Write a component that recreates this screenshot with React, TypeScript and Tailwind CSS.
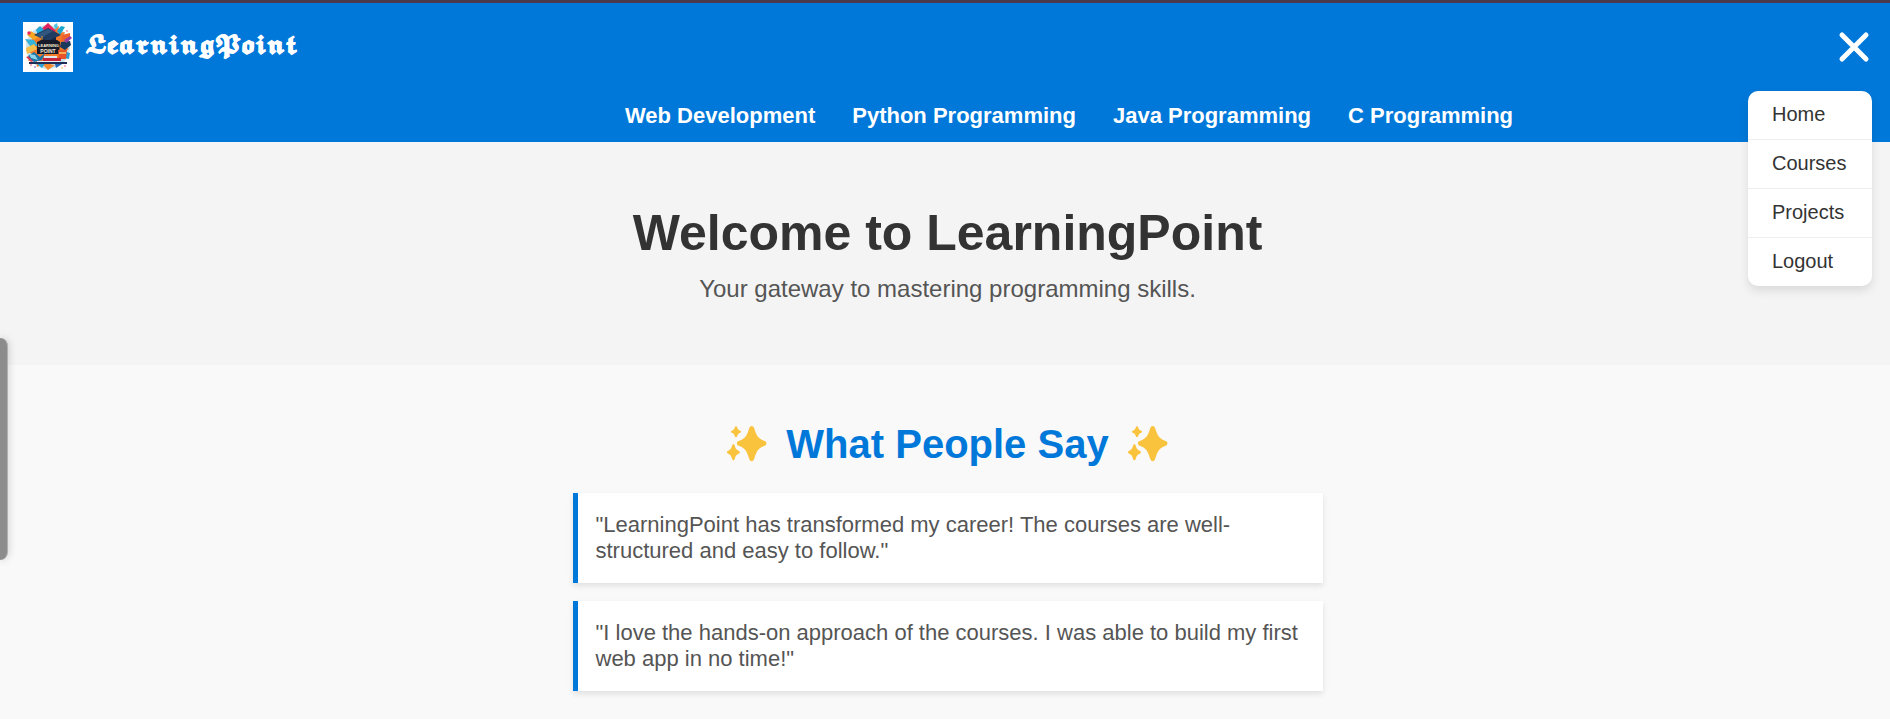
import { useState } from "react";

const courses = ["Web Development", "Python Programming", "Java Programming", "C Programming"];
const menuItems = ["Home", "Courses", "Projects", "Logout"];
const reviews = [
  '"LearningPoint has transformed my career! The courses are well-structured and easy to follow."',
  '"I love the hands-on approach of the courses. I was able to build my first web app in no time!"',
];

function Logo() {
  return (
    <svg viewBox="0 0 50 50" className="size-[50px] shrink-0 bg-white" role="img" aria-label="LearningPoint logo">
      <circle cx="25" cy="25" r="22" fill="#c9e2ee" />
      {/* paint burst */}
      <path d="M25 1l6 6 5-3-1 7 7-1-3 6 7 3-6 4 6 4-6 3 3 7-8-1-1 7-5-3-4 8-5-7-6 4-1-7-8 1 4-7-6-4 6-4-6-5 7-2-3-7 7 2 1-7 5 3z" fill="#f47a2a" />
      <path d="M25 1l8 8-8 5-8-6z" fill="#e3245f" />
      <path d="M17 4l4 4-6 6-2-6z" fill="#21a9dc" />
      <path d="M8 9l8 6-5 3-7-5z" fill="#f9a51f" />
      <circle cx="6" cy="11" r="1.7" fill="#e3245f" />
      <path d="M2 17l9 1 4 6-8 0z" fill="#36b3d8" />
      <path d="M3 26l8-4 3 5-10 5z" fill="#f5c04a" />
      <path d="M34 9l4-5 4 1-5 8z" fill="#1aa4c9" />
      <path d="M31 3l3-2 1 4-3 3z" fill="#4fc6e8" />
      <path d="M39 13l8-2 0 4-9 5z" fill="#f0622c" />
      <path d="M38 20l9-1 1 4-6 5-5-3z" fill="#18395c" />
      <path d="M41 18l6-4 2 2-6 5z" fill="#9a3d9d" />
      <path d="M3 35l9-3 4 5-8 3z" fill="#e23a55" />
      <path d="M37 28l10 3-1 6-10-2z" fill="#2d9fd6" />
      {/* mortarboard */}
      <path d="M18 13l7 2 8-2v6c-5 3-10 3-15 0z" fill="#142743" />
      <path d="M11 13l14-7 13 7-13 6z" fill="#203b60" />
      <path d="M13 13l12-6 5 2-12 7z" fill="#32577f" />
      <path d="M19 14v7" stroke="#f39a26" strokeWidth="1" />
      {/* board */}
      <path d="M14 20l4-2h16l3 2-1 12H14z" fill="#171b29" />
      <g fontFamily="Liberation Sans, sans-serif" fontWeight="700" fill="#f6ead4" textAnchor="middle">
        <text x="25.5" y="25" fontSize="4">LEARNING</text>
        <text x="25" y="31" fontSize="5">POINT</text>
      </g>
      {/* books, mug and tools */}
      <path d="M35 28h9l-1 9h-7z" fill="#e8532a" />
      <path d="M36 30h7v2h-7z" fill="#f9b050" />
      <path d="M5 34l6-4 6 5 5-4-3 7-8 2z" fill="#1c75a6" />
      <path d="M6 32l6 1 3 5-7-2z" fill="#8ed4e8" />
      <path d="M21 34h13v2H21z" fill="#dfe8ee" />
      <path d="M20 36h18v3H20z" fill="#c7273d" />
      <path d="M6 40h38v2H6z" fill="#1d2d55" />
      <path d="M14 39h23v1H14z" fill="#e7edf2" />
      <path d="M14 42l8 0-3 4z" fill="#2aa3da" />
      <path d="M20 43l5-1 7 1-7 5z" fill="#f58a2a" />
      <path d="M32 42l7 0-6 4z" fill="#2567b7" />
      <g fill="#e84a6b">
        <circle cx="8" cy="43" r=".8" /><circle cx="42" cy="44" r=".8" /><circle cx="44" cy="9" r=".8" />
      </g>
      <circle cx="12" cy="45" r=".8" fill="#6b4ba8" />
      <circle cx="39" cy="46" r=".7" fill="#f39a26" />
    </svg>
  );
}

function Sparkles() {
  return (
    <svg viewBox="0 0 40 36" className="h-9 w-10 shrink-0" fill="#fac33e" aria-hidden="true">
      <path d="M24.700 0C26 0 26.800 1 27.300 2.400C29.200 8.400 30.300 12 37 14.700L38.300 15.300C39.800 16.100 39.800 18.600 38.300 19.400L37 20C30.300 22.700 29.200 26.500 27.300 32.600C26.800 34.200 26 35.200 24.700 35.200C23.400 35.200 22.600 34.200 22.100 32.600C20.200 26.500 19.100 22.700 12.400 20L11 19.400C9.500 18.600 9.500 16.100 11 15.300L12.400 14.700C19.100 12 20.200 8.400 22.100 2.400C22.600 1 23.400 0 24.700 0Z" />
      <path d="M9 .2C9.600 .2 9.900 .6 10.100 1.200C10.800 3.200 11.300 4 13.300 4.700C14.400 5.200 14.400 6.200 13.300 6.700C11.300 7.400 10.800 8.300 10.100 10.300C9.900 11 9.600 11.300 9 11.300C8.400 11.300 8.100 11 7.900 10.300C7.200 8.300 6.700 7.400 4.700 6.700C3.600 6.200 3.600 5.200 4.700 4.700C6.700 4 7.200 3.200 7.900 1.200C8.100 .6 8.400 .2 9 .2Z" />
      <path d="M6.400 18.200C7.100 18.200 7.400 18.700 7.700 19.500C8.500 22.500 9.300 23.900 12 25C13.200 25.500 13.200 26.900 12 27.400C9.300 28.500 8.500 29.900 7.700 32.900C7.400 33.700 7.100 34.200 6.400 34.200C5.700 34.200 5.400 33.700 5.100 32.900C4.300 29.900 3.500 28.500 .8 27.400C-.3 26.900-.3 25.500 .8 25C3.500 23.900 4.300 22.500 5.100 19.500C5.400 18.700 5.700 18.200 6.400 18.200Z" />
    </svg>
  );
}

export default function App() {
  const [open, setOpen] = useState(true);

  return (
    <div className="relative min-h-screen bg-[#f9f9f9] font-['Liberation_Sans',Arial,sans-serif]">
      <header className="relative border-t-[3px] border-[#4a3a4c] bg-[#0078d9] text-white">
        <div className="flex items-center justify-between pt-[19px] pr-5 pl-[23px]">
          <a href="#home" className="flex items-center gap-3">
            <Logo />
            <span className="font-['DejaVu_Math_TeX_Gyre','Liberation_Sans',serif] text-[22px] leading-8 font-bold [-webkit-text-stroke:1px_white]">
              𝕷𝖊𝖆𝖗𝖓𝖎𝖓𝖌𝕻𝖔𝖎𝖓𝖙
            </span>
          </a>
          <button
            type="button"
            aria-label="Toggle menu"
            aria-expanded={open}
            onClick={() => setOpen(!open)}
            className="flex size-8 items-center justify-center"
          >
            <svg viewBox="0 0 32 32" className="size-8" stroke="#fff" strokeWidth="5" strokeLinecap="round" aria-hidden="true">
              <path d="M4 4L28 28M28 4L4 28" />
            </svg>
          </button>
        </div>
        <nav aria-label="Courses" className="flex justify-center gap-[37px] pt-[31px] pb-[13px] pl-62 text-[22px] leading-[26px] font-bold">
          {courses.map((course) => (
            <a key={course} href="#courses">{course}</a>
          ))}
        </nav>
        {open && (
          <nav aria-label="Main menu" className="absolute top-22 right-[18px] z-10 w-[124px] overflow-hidden rounded-[10px] bg-white text-[20px] leading-6 text-[#333] shadow-[0_5px_10px_rgba(0,0,0,0.1)]">
            <ul className="divide-y divide-[#eee]">
              {menuItems.map((item) => (
                <li key={item}>
                  <a href={"#" + item.toLowerCase()} className="block px-6 pt-[11px] pb-[13px]">{item}</a>
                </li>
              ))}
            </ul>
          </nav>
        )}
      </header>

      <main>
        <section className="bg-[#f4f4f4] pt-[62px] pb-[62px] pl-[5px] text-center">
          <h1 className="text-[50px] leading-[58px] font-bold text-[#333]">Welcome to LearningPoint</h1>
          <p className="mt-[13px] text-2xl leading-7 text-[#555]">Your gateway to mastering programming skills.</p>
        </section>

        <section className="pt-14 pl-[5px]">
          <h2 className="flex items-center justify-center gap-[19px] text-[40px] leading-[46px] font-bold text-[#0078d9]">
            <Sparkles />
            What People Say
            <Sparkles />
          </h2>
          <div className="mx-auto mt-[26px] flex max-w-[750px] flex-col gap-[18px] pb-7">
            {reviews.map((review) => (
              <blockquote key={review} className="border-l-[5px] border-[#0078d9] bg-white px-[18px] py-[19px] text-[22px] leading-[26px] text-[#555] shadow-[0_3px_6px_rgba(0,0,0,0.1)]">
                {review}
              </blockquote>
            ))}
          </div>
        </section>
      </main>

      <div className="absolute top-[338px] left-0 h-[222px] w-2 rounded-r-lg border-r border-[#b0b0b0] bg-[#8c8c8c] shadow-[0_0_8px_rgba(0,0,0,0.2)]" />
    </div>
  );
}
